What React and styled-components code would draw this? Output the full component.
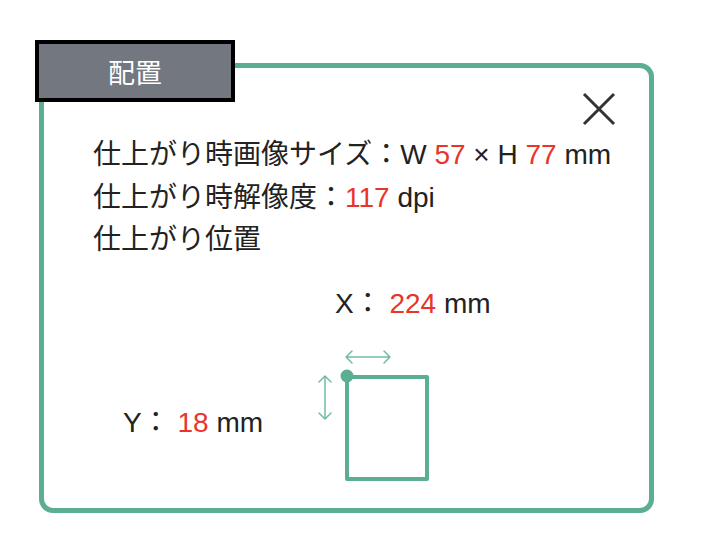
import React from 'react'
import styled, { createGlobalStyle } from 'styled-components'

const GlobalStyle = createGlobalStyle`
  html, body {
    margin: 0;
    padding: 0;
    background: #fff;
  }
  body {
    font-family: "Liberation Sans", "Noto Sans CJK JP", sans-serif;
    color: #222;
  }
`;

const GREEN = '#5bae94';

export default function App() {
    return (
        <>
            <GlobalStyle />
            <Page>
                <Panel>
                    <Tab>配置</Tab>
                    <Header>
                        <CloseButton aria-label="close">
                            <svg width="34" height="34" viewBox="0 0 34 34">
                                <path d="M2 2 L32 32 M32 2 L2 32" stroke="#333" strokeWidth="3" fill="none" />
                            </svg>
                        </CloseButton>
                    </Header>
                    <Info>
                        <Line>仕上がり時画像サイズ：W <Num>57</Num> × H <Num>77</Num> mm</Line>
                        <Line>仕上がり時解像度：<Num>117</Num> dpi</Line>
                        <Line>仕上がり位置</Line>
                    </Info>
                    <Position>
                        <XLabel>X： <Num>224</Num> mm</XLabel>
                        <YLabel>Y： <Num>18</Num> mm</YLabel>
                        <Diagram>
                            <svg width="114" height="136" viewBox="0 0 114 136">
                                <g stroke="#72bca4" strokeWidth="1.5" fill="none" strokeLinecap="round" strokeLinejoin="round">
                                    <path d="M28 9 L72 9 M34 3 L28 9 L34 15 M66 3 L72 9 L66 15" />
                                    <path d="M7 28 L7 71 M1 34 L7 28 L13 34 M1 65 L7 71 L13 65" />
                                </g>
                                <rect x="29" y="29" width="80" height="102" stroke={GREEN} strokeWidth="4" fill="none" strokeLinejoin="round" />
                                <circle cx="29" cy="28" r="6.5" fill={GREEN} />
                            </svg>
                        </Diagram>
                    </Position>
                </Panel>
            </Page>
        </>
    )
}

const Page = styled.div`
    width: 708px;
    height: 544px;
    padding: 63px 0 0 39px;
    box-sizing: border-box;
`;

const Panel = styled.section`
    position: relative;
    width: 615px;
    height: 450px;
    box-sizing: border-box;
    border: 5px solid ${GREEN};
    border-radius: 14px;
    padding: 24px 34px 0 49px;
`;

const Tab = styled.div`
    position: absolute;
    top: -28px;
    left: -9px;
    width: 200px;
    height: 62px;
    box-sizing: border-box;
    border: 4px solid #000;
    background: #727780;
    color: #fff;
    font-size: 27px;
    display: flex;
    align-items: center;
    justify-content: center;
`;

const Header = styled.div`
    display: flex;
    justify-content: flex-end;
    height: 33px;
`;

const CloseButton = styled.button`
    border: none;
    background: none;
    padding: 0;
    width: 34px;
    height: 34px;
    margin-right: -1px;
    cursor: pointer;
    svg {
        display: block;
    }
`;

const Info = styled.div`
    margin-top: 9px;
    font-size: 28px;
    line-height: 42.5px;
`;

const Line = styled.div`
    white-space: nowrap;
`;

const Colon = styled.span`
    margin-left: 4px;
`;

const Num = styled.span`
    color: #e8352b;
`;

const Position = styled.div`
    display: grid;
    grid-template-columns: 227px auto;
    grid-template-rows: auto auto;
    margin-top: 21px;
    font-size: 28px;
    line-height: 42.5px;
`;

const XLabel = styled.div`
    grid-column: 2;
    grid-row: 1;
    padding-left: 15px;
    white-space: nowrap;
`;

const YLabel = styled.div`
    grid-column: 1;
    grid-row: 2;
    padding-left: 30px;
    margin-top: 77px;
    white-space: nowrap;
`;

const Diagram = styled.div`
    grid-column: 2;
    grid-row: 2;
    margin-top: 23px;
    margin-left: -2px;
    svg {
        display: block;
    }
`;
